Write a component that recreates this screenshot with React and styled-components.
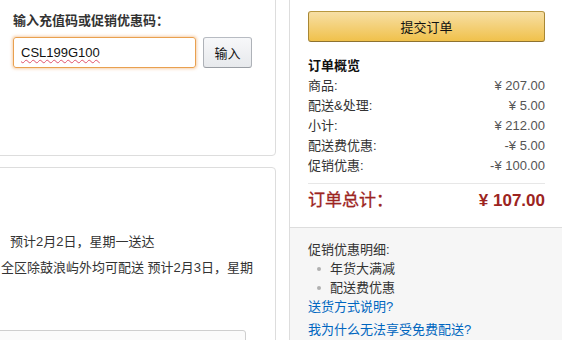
import React from "react";
import styled, { createGlobalStyle } from "styled-components";

const Global = createGlobalStyle`
  html, body { margin: 0; padding: 0; background: #fff; }
  body {
    font-family: "Liberation Sans", Arial, "Noto Sans CJK SC", sans-serif;
    font-size: 13px;
    color: #333;
    overflow: hidden;
  }
`;

const Page = styled.div`
  position: relative;
  width: 562px;
  height: 340px;
  overflow: hidden;
  display: flex;
  gap: 13px;
  align-items: flex-start;
`;

const LeftCol = styled.div`
  width: 296px;
  margin-left: -20px;
  margin-top: -10px;
  display: flex;
  flex-direction: column;
  gap: 11px;
  flex-shrink: 0;
`;

const Card = styled.div`
  box-sizing: border-box;
  border: 1px solid #dddddd;
  border-radius: 4px;
  background: #fff;
  height: ${(p) => p.$h}px;
  padding: ${(p) => p.$pad};
`;

const Heading = styled.div`
  font-weight: bold;
  font-size: 13px;
  line-height: 20px;
  color: #333;
  margin-bottom: 6px;
`;

const CodeRow = styled.div`
  display: flex;
  gap: 7px;
  align-items: center;
`;

const CodeInput = styled.div`
  box-sizing: border-box;
  width: 183px;
  height: 31px;
  border: 1px solid #e9a04f;
  border-radius: 3px;
  box-shadow: 0 0 3px 1px rgba(228, 121, 17, 0.35);
  padding-left: 7px;
  display: flex;
  align-items: center;
  font-size: 13px;
  color: #111;
`;

const Misspelled = styled.span`
  text-decoration: underline wavy #e0506a;
  text-decoration-thickness: 1px;
  text-underline-offset: 2px;
`;

const GreyButton = styled.button`
  box-sizing: border-box;
  width: 49px;
  height: 31px;
  border: 1px solid;
  border-color: #b7bbc2 #aeb2b8 #9a9ea4;
  border-radius: 3px;
  background: linear-gradient(to bottom, #f7f8fa, #e7e9ec);
  font-family: inherit;
  font-size: 13px;
  color: #111;
  padding: 0;
`;

const Line = styled.div`
  line-height: 26px;
  font-size: 13px;
  color: #333;
  white-space: nowrap;
  padding-left: ${(p) => p.$indent}px;
`;

const InnerBox = styled.div`
  box-sizing: border-box;
  margin-top: 49px;
  margin-left: -20px;
  width: 265px;
  height: 40px;
  border: 1px solid #cfcfcf;
  border-radius: 3px;
  background: #fbfbfb;
`;

const RightCol = styled.div`
  width: 273px;
  flex-shrink: 0;
  border-left: 1px solid #dddddd;
  box-sizing: border-box;
  height: 340px;
  display: flex;
  flex-direction: column;
`;

const Summary = styled.div`
  padding: 11px 17px 14px 18px;
  background: #fff;
  border-bottom: 1px solid #dddddd;
`;

const SubmitButton = styled.button`
  box-sizing: border-box;
  width: 100%;
  height: 31px;
  border: 1px solid;
  border-color: #b8973f #a88734 #8e7230;
  border-radius: 3px;
  background: linear-gradient(to bottom, #f7dfa5, #f0c14b);
  font-family: inherit;
  font-size: 13px;
  color: #111;
  padding: 0;
`;

const SectionTitle = styled.div`
  margin-top: 14px;
  font-weight: bold;
  font-size: 13px;
  line-height: 20px;
  color: #111;
`;

const Row = styled.div`
  display: flex;
  justify-content: space-between;
  line-height: 20px;
  font-size: 13px;
  color: #333;
`;

const Price = styled.span`
  color: #555;
`;

const Divider = styled.div`
  margin-top: 7px;
  height: 1px;
  background: #e7e7e7;
`;

const TotalRow = styled.div`
  margin-top: 5px;
  display: flex;
  justify-content: space-between;
  font-size: 17px;
  line-height: 24px;
  font-weight: bold;
  color: #9c2421;
`;

const TotalLabel = styled.span`
  font-weight: normal;
  -webkit-text-stroke: 0.3px #9c2421;
`;

const Details = styled.div`
  flex: 1;
  background: #f6f6f6;
  padding: 12px 17px 0 18px;
  font-size: 13px;
  line-height: 19px;
  color: #333;
`;

const BulletList = styled.ul`
  margin: 0;
  padding: 0 0 0 22px;
  list-style: none;
`;

const Bullet = styled.li`
  position: relative;
  &::before {
    content: "";
    position: absolute;
    left: -13px;
    top: 8px;
    width: 4px;
    height: 4px;
    border-radius: 50%;
    background: #b0b0b0;
  }
`;

const Link = styled.a`
  display: block;
  color: #0066c0;
  text-decoration: none;
  margin-top: ${(p) => p.$mt || 0}px;
`;

export default function App() {
  return (
    <>
      <Global />
      <Page>
        <LeftCol>
          <Card $h={166} $pad="20px 0 0 32px">
            <Heading>输入充值码或促销优惠码：</Heading>
            <CodeRow>
              <CodeInput>
                <Misspelled>CSL199G100</Misspelled>
              </CodeInput>
              <GreyButton>输入</GreyButton>
            </CodeRow>
          </Card>
          <Card $h={200} $pad="61px 0 0 20px">
            <Line $indent={9}>预计2月2日，星期一送达</Line>
            <Line $indent={0}>全区除鼓浪屿外均可配送 预计2月3日，星期</Line>
            <InnerBox />
          </Card>
        </LeftCol>
        <RightCol>
          <Summary>
            <SubmitButton>提交订单</SubmitButton>
            <SectionTitle>订单概览</SectionTitle>
            <Row><span>商品:</span><Price>¥ 207.00</Price></Row>
            <Row><span>配送&amp;处理:</span><Price>¥ 5.00</Price></Row>
            <Row><span>小计:</span><Price>¥ 212.00</Price></Row>
            <Row><span>配送费优惠:</span><Price>-¥ 5.00</Price></Row>
            <Row><span>促销优惠:</span><Price>-¥ 100.00</Price></Row>
            <Divider />
            <TotalRow>
              <TotalLabel>订单总计：</TotalLabel>
              <span>¥ 107.00</span>
            </TotalRow>
          </Summary>
          <Details>
            <div>促销优惠明细:</div>
            <BulletList>
              <Bullet>年货大满减</Bullet>
              <Bullet>配送费优惠</Bullet>
            </BulletList>
            <Link href="#">送货方式说明?</Link>
            <Link href="#" $mt={4}>我为什么无法享受免费配送?</Link>
          </Details>
        </RightCol>
      </Page>
    </>
  );
}
